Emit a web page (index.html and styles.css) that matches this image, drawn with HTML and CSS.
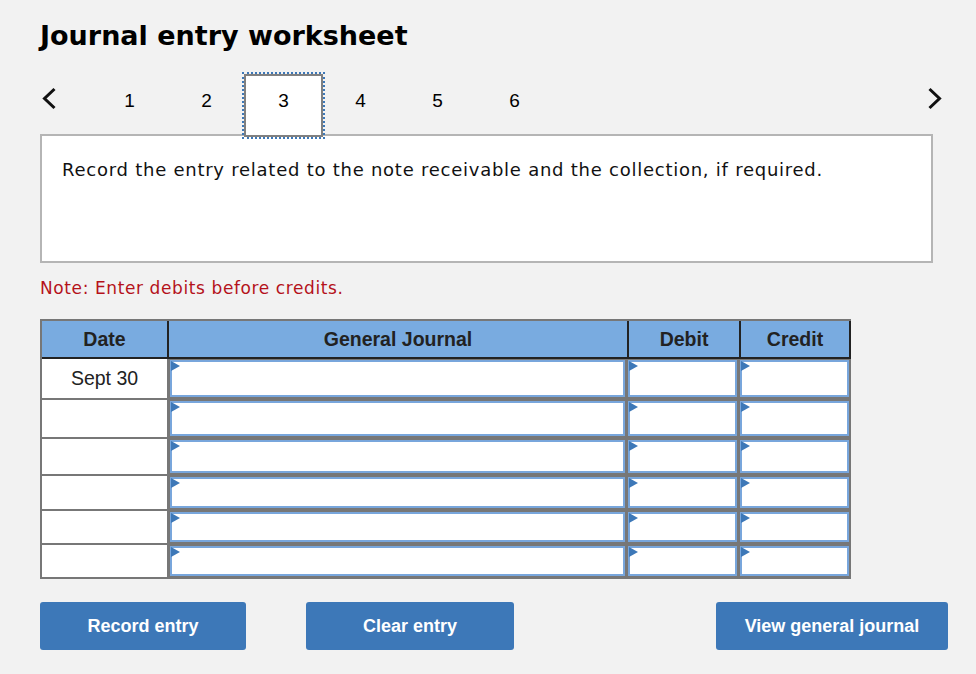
FILE: index.html
```html
<!DOCTYPE html>
<html>
<head>
<meta charset="utf-8">
<link rel="stylesheet" href="styles.css">
</head>
<body>
<div class="page">
  <h1 class="title">Journal entry worksheet</h1>
  <div class="nav">
    <span class="arrow arrow-left"><svg width="16" height="24" viewBox="0 0 16 24"><path d="M13.5 2 L3.5 11.5 L13.5 21" fill="none" stroke="#111" stroke-width="3"/></svg></span>
    <div class="tabs">
      <span class="tab">1</span>
      <span class="tab">2</span>
      <span class="tab active">3</span>
      <span class="tab">4</span>
      <span class="tab">5</span>
      <span class="tab">6</span>
    </div>
    <span class="arrow arrow-right"><svg width="16" height="24" viewBox="0 0 16 24"><path d="M2.5 2 L12.5 11.5 L2.5 21" fill="none" stroke="#111" stroke-width="3"/></svg></span>
  </div>
  <div class="prompt">Record the entry related to the note receivable and the collection, if required.</div>
  <p class="note">Note: Enter debits before credits.</p>
  <div class="journal">
    <div class="jhead">
      <div class="hcell">Date</div>
      <div class="hcell">General Journal</div>
      <div class="hcell">Debit</div>
      <div class="hcell">Credit</div>
    </div>
    <div class="jbody">
      <div class="dcell">Sept 30</div><div class="icell"></div><div class="icell"></div><div class="icell"></div>
      <div class="dcell"></div><div class="icell"></div><div class="icell"></div><div class="icell"></div>
      <div class="dcell"></div><div class="icell"></div><div class="icell"></div><div class="icell"></div>
      <div class="dcell"></div><div class="icell"></div><div class="icell"></div><div class="icell"></div>
      <div class="dcell"></div><div class="icell"></div><div class="icell"></div><div class="icell"></div>
      <div class="dcell"></div><div class="icell"></div><div class="icell"></div><div class="icell"></div>
    </div>
  </div>
  <div class="buttons">
    <button class="btn btn-record">Record entry</button>
    <button class="btn btn-clear">Clear entry</button>
    <button class="btn btn-view">View general journal</button>
  </div>
</div>
</body>
</html>
```
FILE: styles.css
```css
html, body {
  margin: 0;
  padding: 0;
  background: #f2f2f2;
}
.page {
  width: 908px;
  padding: 18px 0 0 40px;
  font-family: "DejaVu Sans", Verdana, sans-serif;
  color: #111;
}
.title {
  margin: 0;
  font-size: 27px;
  line-height: 36px;
  font-weight: bold;
  color: #000;
}
.nav {
  display: flex;
  align-items: center;
  width: 903px;
  height: 65px;
  margin-top: 18px;
}
.arrow {
  display: flex;
  width: 16px;
  height: 24px;
  margin-bottom: 11px;
}
.arrow-left { margin-left: 1px; }
.arrow-right { margin-left: auto; }
.tabs {
  display: flex;
  margin-left: 34px;
  height: 65px;
}
.tab {
  width: 77px;
  height: 65px;
  display: flex;
  align-items: center;
  justify-content: center;
  padding-bottom: 8px;
  font-family: "Liberation Sans", Arial, sans-serif;
  font-size: 19px;
  color: #000;
  box-sizing: border-box;
}
.tab.active {
  position: relative;
  z-index: 1;
  width: 79px;
  margin: 0 -1px;
  background: #fff;
  border: 2px solid #808080;
  outline: 2px dotted #3d78b8;
  outline-offset: 0;
  height: 63px;
  margin-top: 2px;
  padding-bottom: 10px;
}
.prompt {
  margin-top: -3px;
  background: #fff;
  border: 2px solid #b5b5b5;
  box-sizing: border-box;
  width: 893px;
  height: 129px;
  padding: 22px 0 0 20px;
  font-size: 18px;
  letter-spacing: 0.75px;
  line-height: 24px;
  color: #111;
}
.note {
  margin: 15px 0 0 0;
  font-size: 17px;
  letter-spacing: 0.6px;
  line-height: 20px;
  color: #b5121b;
}
.journal {
  margin-top: 21px;
  width: 809px;
  border-top: 2px solid #777;
  border-left: 2px solid #777;
  border-bottom: 2px solid #777;
  background: #777;
  font-family: "Liberation Sans", Arial, sans-serif;
}
.jhead {
  display: grid;
  grid-template-columns: 127px 460px 112px 110px;
  height: 38px;
  background: #79abe0;
  border-bottom: 2px solid #222;
  box-sizing: border-box;
}
.hcell {
  display: flex;
  align-items: center;
  justify-content: center;
  border-right: 2px solid #222;
  font-weight: bold;
  font-size: 19.5px;
  color: #222;
}
.jbody {
  display: grid;
  grid-template-columns: 125px 455px 109px 109px;
  grid-template-rows: 39px 37px 35px 33px 32px 32px;
  column-gap: 3px;
  row-gap: 2px;
  padding-right: 2px;
}
.dcell {
  background: #fff;
  display: flex;
  align-items: center;
  justify-content: center;
  font-size: 19.5px;
  color: #222;
}
.icell {
  position: relative;
  background: #fff;
  border: 2px solid #78a6dc;
  margin: 1px 0;
}
.icell::before {
  content: "";
  position: absolute;
  left: -1px;
  top: -1px;
  width: 0;
  height: 0;
  border-left: 9px solid #3d78b8;
  border-top: 5px solid transparent;
  border-bottom: 5px solid transparent;
}
.buttons {
  display: flex;
  margin-top: 23px;
  width: 908px;
}
.btn {
  height: 48px;
  border: none;
  border-radius: 3px;
  background: #3d78b8;
  color: #fff;
  font-family: "Liberation Sans", Arial, sans-serif;
  font-weight: bold;
  font-size: 18px;
  padding: 0;
}
.btn-record { width: 206px; }
.btn-clear { width: 208px; margin-left: 60px; }
.btn-view { width: 232px; margin-left: auto; }
```
